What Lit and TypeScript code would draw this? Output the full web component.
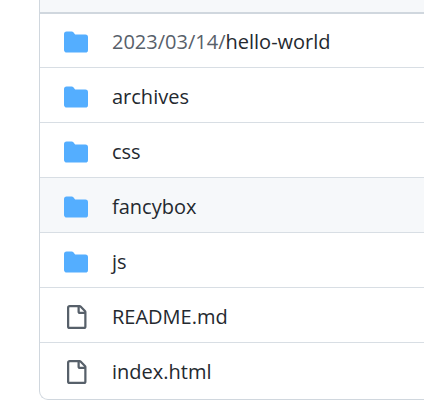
import { LitElement, html, css, svg } from "lit";
import { customElement, property } from "lit/decorators.js";

interface Entry {
  kind: "folder" | "file";
  name: string;
  parent?: string;
  active?: boolean;
}

const ENTRIES: Entry[] = [
  { kind: "folder", parent: "2023/03/14/", name: "hello-world" },
  { kind: "folder", name: "archives" },
  { kind: "folder", name: "css" },
  { kind: "folder", name: "fancybox", active: true },
  { kind: "folder", name: "js" },
  { kind: "file", name: "README.md" },
  { kind: "file", name: "index.html" },
];

const FOLDER = svg`<path d="M1.75 1A1.75 1.75 0 0 0 0 2.75v10.5C0 14.216.784 15 1.75 15h12.5A1.75 1.75 0 0 0 16 13.250v-8.5A1.75 1.75 0 0 0 14.250 3H7.5a.25.25 0 0 1-.2-.1l-.9-1.2C6.070 1.260 5.550 1 5 1H1.750Z"/>`;
const FILE = svg`<path d="M2 1.75C2 .784 2.784 0 3.750 0h6.586c.464 0 .909.184 1.237.513l2.914 2.914c.329.328.513.773.513 1.237v9.586A1.750 1.750 0 0 1 13.250 16h-9.500A1.750 1.750 0 0 1 2 14.250Zm1.750-.250a.250.250 0 0 0-.250.250v12.500c0 .138.112.250.250.250h9.500a.250.250 0 0 0 .250-.250V6h-2.750A1.750 1.750 0 0 1 9 4.250V1.500Zm6.750.062V4.250c0 .138.112.250.250.250h2.688l-.011-.013-2.914-2.914-.013-.011Z"/>`;

@customElement("file-icon")
class FileIcon extends LitElement {
  @property() kind: Entry["kind"] = "file";

  static styles = css`
    :host {
      display: block;
      width: 24px;
      height: 24px;
    }
    .icon {
      display: block;
      width: 100%;
      height: 100%;
    }
    .folder {
      fill: #54aeff;
    }
    .file {
      fill: #57606a;
    }
  `;

  render() {
    return html`<svg class="icon ${this.kind}" viewBox="0 0 16 16" aria-hidden="true">
      ${this.kind === "folder" ? FOLDER : FILE}
    </svg>`;
  }
}

@customElement("app-root")
class AppRoot extends LitElement {
  static styles = css`
    :host {
      display: block;
      padding-left: 39px;
      overflow: hidden;
      background: #ffffff;
      color: #24292f;
      font-family: "Segoe UI", "Open Sans", "Noto Sans", sans-serif;
      font-size: 20px;
      line-height: 24px;
    }
    .box {
      border-left: 1px solid #d0d7de;
      border-bottom: 1px solid #d0d7de;
      border-bottom-left-radius: 9px;
      overflow: hidden;
    }
    .head {
      height: 12px;
      background: #f6f8fa;
      border-bottom: 1px solid #d0d7de;
    }
    .list {
      margin: 0;
      padding: 0;
      list-style: none;
    }
    .row {
      display: flex;
      align-items: center;
      gap: 24px;
      padding: 17px 24px 13px;
      border-top: 1px solid #d8dee4;
    }
    .row:first-child {
      padding-top: 16px;
      border-top-color: #d0d7de;
    }
    .row:last-child {
      padding-bottom: 15px;
    }
    .active {
      background: #f6f8fa;
    }
    .link {
      color: inherit;
      text-decoration: none;
      white-space: nowrap;
    }
    .parent {
      color: #57606a;
    }
  `;

  render() {
    return html`
      <div class="box">
        <div class="head"></div>
        <ul class="list">
          ${ENTRIES.map(
            (e) => html`<li class="row ${e.active ? "active" : ""}">
              <file-icon .kind=${e.kind}></file-icon>
              <a class="link" href="#"
                >${e.parent ? html`<span class="parent">${e.parent}</span>` : ""}${e.name}</a
              >
            </li>`
          )}
        </ul>
      </div>
    `;
  }
}
